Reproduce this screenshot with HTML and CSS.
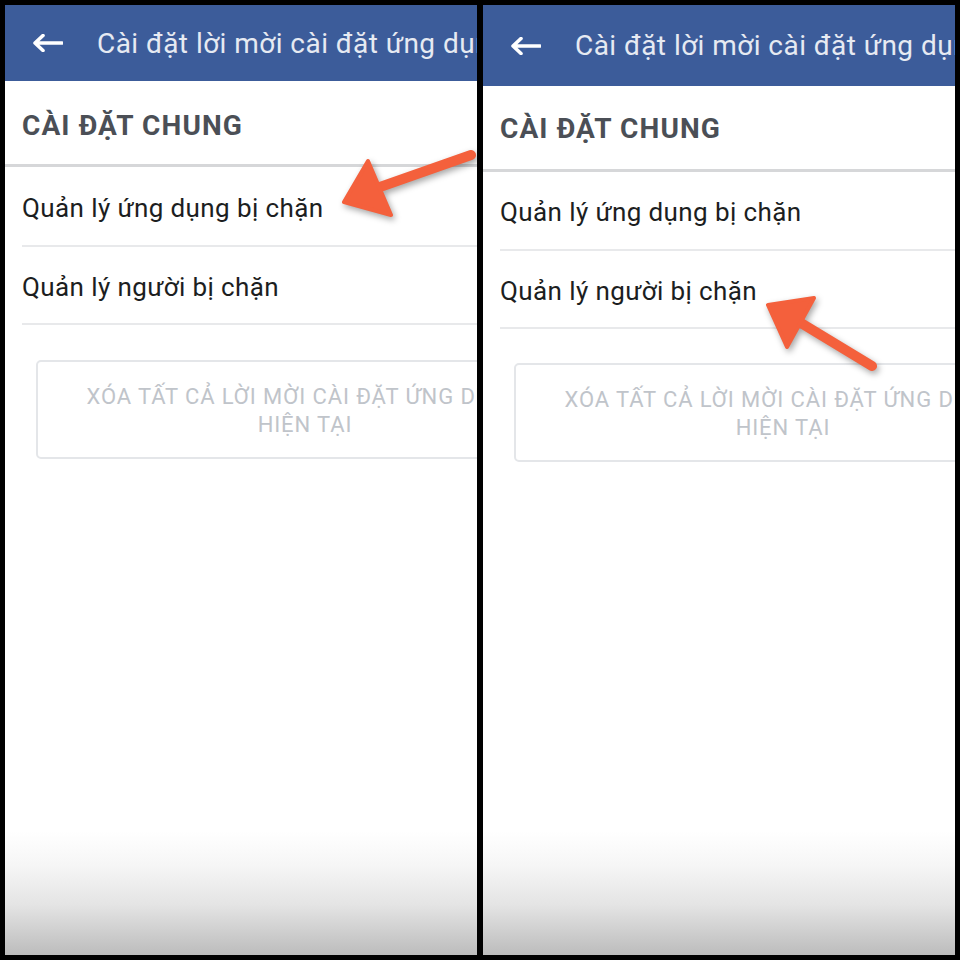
FILE: index.html
```html
<!DOCTYPE html>
<html lang="vi">
<head>
<meta charset="utf-8">
<title>Cài đặt lời mời cài đặt ứng dụng</title>
<link rel="stylesheet" href="styles.css">
</head>
<body>
<div class="frame">
  <div class="panel">
    <div class="screen">
      <header class="appbar">
        <svg class="back" viewBox="0 0 30 18" width="30" height="18"><path d="M2 9H29M10 1.5L2 9L10 16.5" fill="none" stroke="#fff" stroke-width="3.6" stroke-linecap="round" stroke-linejoin="round"/></svg>
        <span class="title">Cài đặt lời mời cài đặt ứng dụng</span>
      </header>
      <div class="section">CÀI ĐẶT CHUNG</div>
      <div class="item item-first">Quản lý ứng dụng bị chặn</div>
      <div class="item">Quản lý người bị chặn</div>
      <div class="btn">XÓA TẤT CẢ LỜI MỜI CÀI ĐẶT ỨNG DỤNG<br>HIỆN TẠI</div>
    </div>
    <svg class="pointer" viewBox="0 0 472 950" width="472" height="950">
      <path d="M375 182L466 150" stroke="#f4603c" stroke-width="10" stroke-linecap="round"/>
      <path d="M339 197L363 156L386 210Z" fill="#f4603c" stroke="#f4603c" stroke-width="4" stroke-linejoin="round"/>
    </svg>
  </div>
  <div class="panel">
    <div class="screen">
      <header class="appbar appbar-tall">
        <svg class="back" viewBox="0 0 30 18" width="30" height="18"><path d="M2 9H29M10 1.5L2 9L10 16.5" fill="none" stroke="#fff" stroke-width="3.6" stroke-linecap="round" stroke-linejoin="round"/></svg>
        <span class="title">Cài đặt lời mời cài đặt ứng dụng</span>
      </header>
      <div class="section section-alt">CÀI ĐẶT CHUNG</div>
      <div class="item item-alt">Quản lý ứng dụng bị chặn</div>
      <div class="item item-alt2">Quản lý người bị chặn</div>
      <div class="btn btn-alt">XÓA TẤT CẢ LỜI MỜI CÀI ĐẶT ỨNG DỤNG<br>HIỆN TẠI</div>
    </div>
    <svg class="pointer" viewBox="0 0 472 950" width="472" height="950">
      <path d="M318 318L389 361" stroke="#f4603c" stroke-width="10" stroke-linecap="round"/>
      <path d="M285 300L331 293L304 342Z" fill="#f4603c" stroke="#f4603c" stroke-width="4" stroke-linejoin="round"/>
    </svg>
  </div>
</div>
</body>
</html>
```
FILE: styles.css
```css
html, body {
  margin: 0;
  padding: 0;
  background: #000;
}
body {
  font-family: Roboto, "Noto Sans", "DejaVu Sans", sans-serif;
}
.frame {
  display: flex;
  gap: 6px;
  padding: 5px;
  width: 960px;
  height: 960px;
  box-sizing: border-box;
}
.panel {
  position: relative;
  width: 472px;
  height: 950px;
  overflow: hidden;
  background: linear-gradient(to bottom, #ffffff 0, #ffffff 826px, #f6f6f6 860px, #e4e4e4 900px, #bcbcbc 950px);
}
.screen {
  width: 600px;
}
.appbar {
  height: 76px;
  background: #3c5c9a;
  display: flex;
  align-items: center;
  white-space: nowrap;
}
.appbar-tall {
  height: 81px;
}
.back {
  margin-left: 28px;
  margin-right: 34px;
  flex: none;
}
.title {
  color: #e6eaf2;
  font-size: 28px;
  letter-spacing: 0.45px;
}
.section {
  height: 86px;
  padding-left: 17px;
  padding-top: 5px;
  box-sizing: border-box;
  display: flex;
  align-items: center;
  font-size: 28px;
  font-weight: 700;
  letter-spacing: 1.1px;
  color: #4b4f56;
  border-bottom: 3px solid #d6d7d9;
}
.section-alt {
  padding-top: 1px;
}
.item {
  height: 78px;
  margin-left: 17px;
  padding-top: 4px;
  box-sizing: border-box;
  display: flex;
  align-items: center;
  font-size: 26px;
  letter-spacing: 0.4px;
  color: #1c1e21;
  border-bottom: 2px solid #e8e9eb;
}
.item-first {
  height: 80px;
}
.item-alt {
  height: 79px;
  padding-top: 3px;
}
.item-alt2 {
  padding-top: 3px;
}
.btn {
  margin: 35px 31px 0;
  height: 99px;
  padding-top: 3px;
  box-sizing: border-box;
  border: 2px solid #e4e6e9;
  border-radius: 5px;
  display: flex;
  align-items: center;
  justify-content: center;
  text-align: center;
  font-size: 22px;
  letter-spacing: 0.9px;
  line-height: 28px;
  color: #c0c4ca;
  white-space: nowrap;
}
.btn-alt {
  margin-top: 34px;
}
.pointer {
  position: absolute;
  left: 0;
  top: 0;
  filter: drop-shadow(2px 3px 3px rgba(0, 0, 0, 0.35));
}
```
